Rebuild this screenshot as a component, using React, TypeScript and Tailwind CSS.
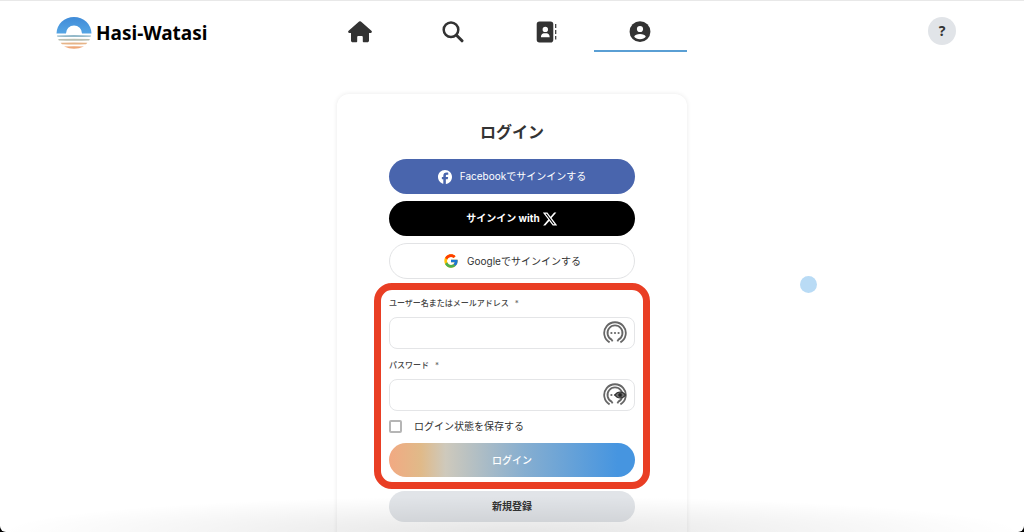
import type { ReactNode } from "react";
import { FcGoogle } from "react-icons/fc";
import { FaFacebook, FaXTwitter } from "react-icons/fa6";

function Logo() {
  return (
    <svg viewBox="0 0 36 32" className="h-8 w-9 shrink-0" aria-hidden="true">
      <defs>
        <linearGradient id="sky" x1="0" y1="0" x2="0" y2="1">
          <stop offset="0" stopColor="#3f8bd8" />
          <stop offset="1" stopColor="#55a5e4" />
        </linearGradient>
      </defs>
      <path d="M.5 16.500a17.500 16.500 0 0 1 35 0H26a8 8 0 0 0-16 0Z" fill="url(#sky)" />
      <path d="M1 18.400Q18 17.600 35 18.400L34.600 19.800Q18 20.200 1.400 19.800Z" fill="#93b9c9" />
      <path d="M2.200 22.100Q18 21.500 33.800 22.100L33.200 23.500Q18 23.900 2.800 23.500Z" fill="#b9bfb2" />
      <path d="M4.600 25.800Q18 25.200 31.400 25.800L30 27.300Q18 27.700 6 27.300Z" fill="#e6b488" />
      <path d="M8 29.400Q18 28.900 28 29.400Q23 31.800 18 31.800T8 29.400Z" fill="#eea778" />
    </svg>
  );
}

function HomeIcon() {
  return (
    <svg viewBox="0 0 24 22" className="h-[22px] w-6" fill="#333" aria-hidden="true">
      <path d="M11.100.6a1.400 1.400 0 0 1 1.800 0l10.500 9.200c.9.800.5 2.100-.7 2.100H21v7.600c0 1-.7 1.800-1.800 1.800h-3.400c-.6 0-1-.4-1-1v-4c0-.7-.5-1.200-1.200-1.200h-3.200c-.7 0-1.200.5-1.200 1.200v4c0 .6-.4 1-1 1H4.800c-1.100 0-1.800-.8-1.800-1.800v-7.600H1.300c-1.200 0-1.600-1.300-.7-2.100Z" />
    </svg>
  );
}

function SearchIcon() {
  return (
    <svg viewBox="0 0 22 22" className="size-[22px]" fill="none" stroke="#333" aria-hidden="true">
      <circle cx="9" cy="8.700" r="7.300" strokeWidth="2.500" />
      <path d="m14.500 14.200 5.500 5.600" strokeWidth="3" strokeLinecap="round" />
    </svg>
  );
}

function ContactsIcon() {
  return (
    <svg viewBox="0 0 22 22" className="size-[22px]" fill="#333" aria-hidden="true">
      <path
        fillRule="evenodd"
        d="M3.500.5h11A2.800 2.800 0 0 1 17.300 3.300v15.400a2.800 2.800 0 0 1-2.800 2.800h-11A2.800 2.800 0 0 1 .7 18.700V3.300A2.800 2.800 0 0 1 3.500.5ZM9.300 5.700a2.700 2.700 0 1 0 0 5.400 2.700 2.700 0 0 0 0-5.400ZM4.900 16.200h8.800c0-2.700-1.700-4-3-4H7.900c-1.300 0-3 1.300-3 4Z"
      />
      <path d="M19.700 3v4M19.700 9v4M19.700 15v3.500" stroke="#333" strokeWidth="1.200" />
    </svg>
  );
}

function AccountIcon() {
  return (
    <svg viewBox="0 0 22 22" className="size-[22px]" aria-hidden="true">
      <circle cx="11" cy="10.700" r="10.400" fill="#333" />
      <circle cx="11" cy="8" r="3.100" fill="#fff" />
      <path d="M5.200 15.800c.5-2 3-2.900 5.800-2.900s5.300.9 5.800 2.900c-1.200 1.500-3.200 2.400-5.800 2.400s-4.600-.9-5.800-2.400Z" fill="#fff" />
    </svg>
  );
}

function PasswordManagerIcon({ eye = false }: { eye?: boolean }) {
  return (
    <svg viewBox="0 0 24 24" className="size-6" fill="none" stroke="#666" aria-hidden="true">
      <path d="M6.600 21.400A10.800 10.800 0 1 1 17.400 21.400" strokeWidth="1.800" />
      <path d="M9.600 20.400 8.600 18.600A7.500 7.500 0 1 1 15.400 18.600L14.400 20.400" strokeWidth="1.800" />
      <g fill="#666" stroke="none">
        <circle cx="8.400" cy="12" r="1.100" />
        <circle cx="12" cy="12" r="1.100" />
        <circle cx="15.600" cy="12" r="1.100" />
      </g>
      {eye && (
        <g stroke="#333">
          <path d="M12 12c2.500-4 7.800-4 10.400 0-2.600 4-7.900 4-10.400 0Z" fill="#777" strokeWidth="1.200" />
          <circle cx="17.200" cy="12" r="1.700" fill="#222" strokeWidth=".8" />
        </g>
      )}
    </svg>
  );
}

const tabs: { label: string; icon: ReactNode; active?: boolean }[] = [
  { label: "ホーム", icon: <HomeIcon /> },
  { label: "検索", icon: <SearchIcon /> },
  { label: "連絡先", icon: <ContactsIcon /> },
  { label: "アカウント", icon: <AccountIcon />, active: true },
];

function Field({ id, label, type, children }: { id: string; label: string; type: string; children: ReactNode }) {
  return (
    <div>
      <label htmlFor={id} className="flex h-[14px] items-center gap-1.5 text-[8px] font-medium text-[#444]">
        {label}
        <span className="font-normal text-[#666]">*</span>
      </label>
      <div className="mt-[7px] flex h-8 items-center rounded-lg border border-[#e4e5e7] pr-[7px]">
        <input id={id} type={type} className="h-full min-w-0 flex-1 bg-transparent px-2 text-[10px] outline-none" />
        {children}
      </div>
    </div>
  );
}

export default function App() {
  return (
    <div className="h-screen overflow-hidden bg-black font-['Inter','Noto_Sans_CJK_JP',sans-serif] text-[#333]">
      <div className="relative h-full overflow-hidden rounded-b-md border-t border-[#e8e8e8] bg-white">
        <header className="grid grid-cols-[257fr_374fr_269fr] pr-[68px] pl-14">
          <a href="#" className="flex h-16 items-center gap-1 font-['Noto_Sans',sans-serif] text-[19px] font-bold text-black">
            <Logo />
            Hasi-Watasi
          </a>
          <nav className="grid h-[51px] grid-cols-4">
            {tabs.map((tab) => (
              <a
                key={tab.label}
                href="#"
                aria-label={tab.label}
                className={
                  tab.active
                    ? "flex justify-center border-b-2 border-[#5a9fd4] pt-5"
                    : "flex justify-center border-b-2 border-transparent pt-5"
                }
              >
                {tab.icon}
              </a>
            ))}
          </nav>
          <div className="flex h-15 items-center justify-end">
            <button
              aria-label="ヘルプ"
              className="flex size-7 items-center justify-center rounded-full bg-[#e1e4e8] font-['Noto_Sans',sans-serif] text-sm font-bold text-[#333]"
            >
              ?
            </button>
          </div>
        </header>

        <main className="mx-auto mt-[29px] w-[350px] rounded-xl bg-white px-[52px] pt-[26px] pb-12 shadow-[0_0_5px_rgba(0,0,0,0.09)]">
          <h1 className="text-center text-base leading-6 font-bold">ログイン</h1>
          <div className="mt-[15px] flex flex-col gap-[7px] text-[10px]">
            <button className="flex h-[35px] items-center justify-center gap-2 rounded-full bg-[#4965ad] text-white">
              <FaFacebook className="size-[14px]" />
              Facebookでサインインする
            </button>
            <button className="flex h-[35px] items-center justify-center gap-0.5 rounded-full bg-black font-bold text-white">
              サインイン with
              <FaXTwitter className="size-4" />
            </button>
            <button className="flex h-9 items-center justify-center gap-2 rounded-full border border-[#e2e3e5] bg-white">
              <FcGoogle className="size-4" />
              Googleでサインインする
            </button>
          </div>

          <form className="relative mt-[17px]" onSubmit={(e) => e.preventDefault()}>
            <div className="pointer-events-none absolute -inset-x-[15px] -top-[13px] -bottom-3 rounded-[18px] border-[7px] border-[#e93e24]" />
            <div className="flex flex-col gap-[9px]">
              <Field id="user" label="ユーザー名またはメールアドレス" type="text">
                <PasswordManagerIcon />
              </Field>
              <Field id="password" label="パスワード" type="password">
                <PasswordManagerIcon eye />
              </Field>
            </div>
            <label className="mt-[7px] flex h-4 items-center gap-3 text-[10px]">
              <input
                type="checkbox"
                className="size-[13px] appearance-none rounded-[2px] border-2 border-[#b5b5b5] bg-white checked:bg-[#4695e0]"
              />
              ログイン状態を保存する
            </label>
            <button className="mt-[9px] h-[34px] w-full rounded-full bg-[linear-gradient(90deg,#f2a982_0%,#e0ba89_13%,#cec9bc_23%,#86aed0_55%,#4695e0_93%)] text-[10px] font-medium text-white">
              ログイン
            </button>
          </form>

          <button className="mt-[14px] h-[31px] w-full rounded-full bg-[#e1e4e8] text-[10px] font-bold">新規登録</button>
        </main>

        <div className="pointer-events-none absolute top-[275px] left-[78.100%] size-[17px] rounded-full bg-[#b9dbf5]" />
        <div className="pointer-events-none absolute inset-x-0 bottom-0 h-9 bg-[radial-gradient(ellipse_50%_100%_at_50%_100%,rgba(0,0,0,0.1),transparent)]" />
      </div>
    </div>
  );
}
